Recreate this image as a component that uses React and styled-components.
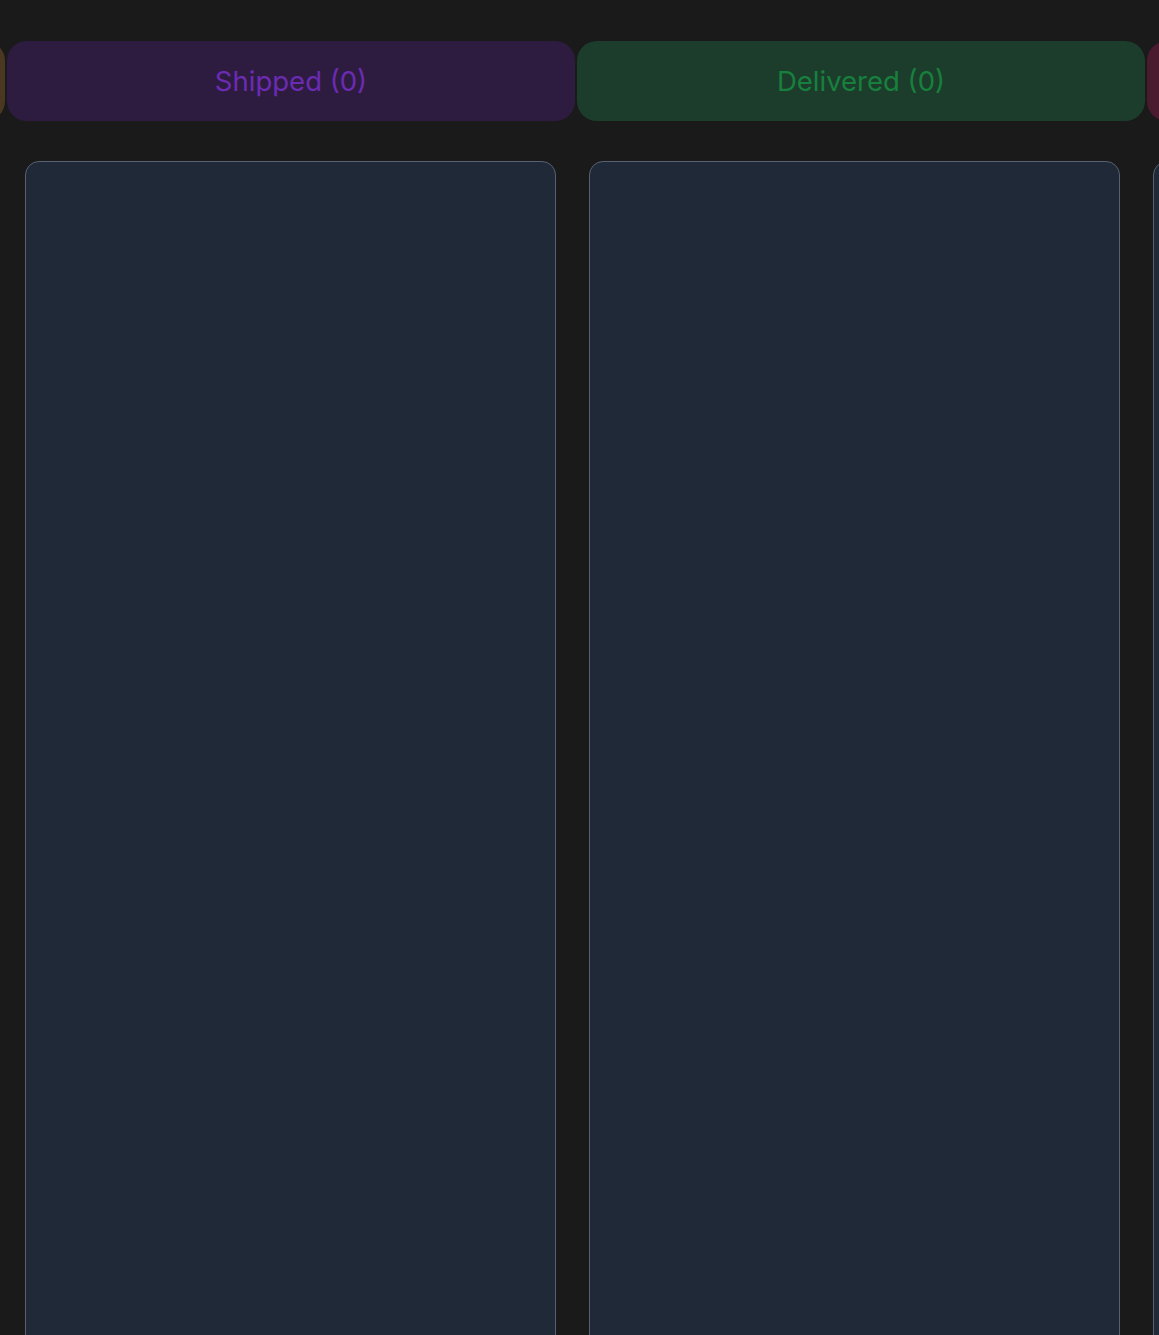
import React from "react";
import styled, { createGlobalStyle } from "styled-components";

const GlobalStyle = createGlobalStyle`
  html, body {
    margin: 0;
    padding: 0;
    background: #1a1a1b;
    font-family: Inter, "Noto Sans", sans-serif;
    overflow: hidden;
  }
`;

const Board = styled.div`
  width: 1159px;
  height: 1335px;
  overflow: hidden;
  background: #1a1a1b;
`;

const TabRow = styled.div`
  display: flex;
  gap: 2px;
  padding-top: 41px;
  margin-left: -563px;
`;

const Tab = styled.div`
  flex: 0 0 568px;
  height: 80px;
  border-radius: 20px;
  display: flex;
  align-items: center;
  justify-content: center;
  font-size: 27.5px;
  background: ${(p) => p.bg};
  color: ${(p) => p.fg};
`;

const ColumnRow = styled.div`
  display: flex;
  gap: 33px;
  padding-left: 25px;
  margin-top: 40px;
`;

const Column = styled.div`
  flex: 0 0 531px;
  height: 1300px;
  box-sizing: border-box;
  background: #1f2937;
  border: 1.5px solid #586173;
  border-radius: 14px;
`;

// edge tabs are scrolled mostly out of view, their labels are not visible
const tabs = [
  { id: "pending", label: "", bg: "#4a3920", fg: "#a16207" },
  { id: "shipped", label: "Shipped (0)", bg: "#2e1c40", fg: "#6b2bb3" },
  { id: "delivered", label: "Delivered (0)", bg: "#1c3d2c", fg: "#17803d" },
  { id: "cancelled", label: "", bg: "#4a1a2e", fg: "#be123c" },
];

export default function App() {
  return (
    <>
      <GlobalStyle />
      <Board>
        <TabRow>
          {tabs.map((t) => (
            <Tab key={t.id} bg={t.bg} fg={t.fg}>
              {t.label}
            </Tab>
          ))}
        </TabRow>
        <ColumnRow>
          <Column />
          <Column />
          <Column />
        </ColumnRow>
      </Board>
    </>
  );
}
